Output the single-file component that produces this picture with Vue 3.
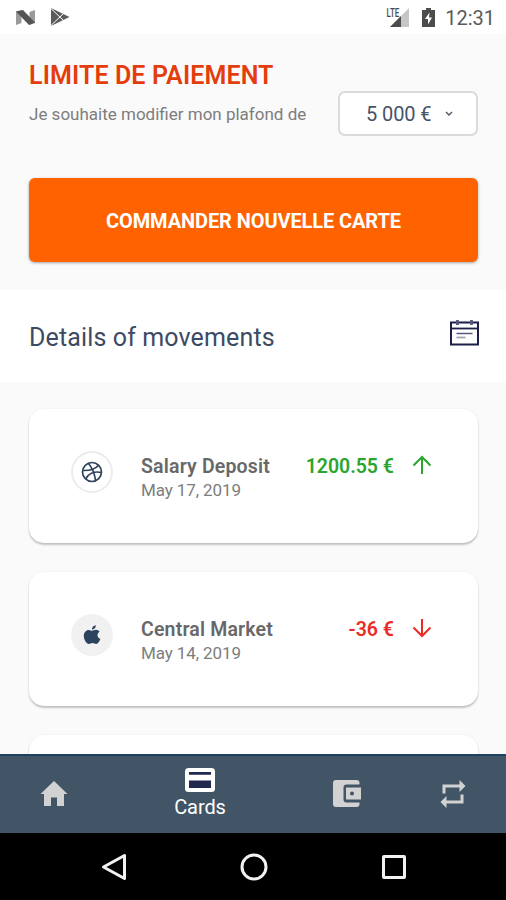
<template>
  <div class="screen">
    <header class="status-bar">
      <div class="status-left">
        <svg width="21" height="17" viewBox="0 0 21 17">
          <path d="M1 2.500 6.500 1v13L1 16z" fill="#9a9a9a" />
          <path d="M14.500 3 20 1v13l-5.500 2z" fill="#9a9a9a" />
          <path d="M1 2.500 8 1l12 12.500-6 2.500z" fill="#555" />
        </svg>
        <svg width="20" height="20" viewBox="0 0 20 20">
          <path d="M1 1 19.500 10 1 19z" fill="#5c5c5c" />
          <path d="M1 1.500 14 14M1 18.500 14 6" stroke="#fff" stroke-width="1" fill="none" />
        </svg>
      </div>
      <div class="status-right">
        <div class="signal">
          <span class="lte">LTE</span>
          <svg width="20" height="19" viewBox="0 0 20 19">
            <path d="M19 0v19H0z" fill="#c6c6c6" />
            <path d="M11 8v11H0z" fill="#4c4c4c" />
          </svg>
        </div>
        <svg class="battery" width="13" height="19" viewBox="0 0 13 19">
          <path d="M4 0h5v2h4v17H0V2h4z" fill="#4c4c4c" />
          <path d="M7.500 4.500 3 11h3v5.500L10 9.500H7z" fill="#fff" />
        </svg>
        <span class="clock">12:31</span>
      </div>
    </header>

    <section class="limit">
      <h1 class="limit-title">LIMITE DE PAIEMENT</h1>
      <div class="limit-row">
        <span class="limit-text">Je souhaite modifier mon plafond de</span>
        <button class="limit-select" type="button">
          <span>5 000 €</span>
          <svg width="8" height="6" viewBox="0 0 8 6">
            <path d="M1 1l3 3 3-3" fill="none" stroke="#4b5563" stroke-width="1.400" />
          </svg>
        </button>
      </div>
      <button class="order-btn" type="button"><span>COMMANDER NOUVELLE CARTE</span></button>
    </section>

    <section class="movements-head">
      <h2>Details of movements</h2>
      <svg width="29" height="26" viewBox="0 0 29 26">
        <rect x="1" y="2.500" width="27" height="22" fill="none" stroke="#1c1f4a" stroke-width="2" />
        <path d="M1 8.500h27" stroke="#1c1f4a" stroke-width="1.800" />
        <path d="M7.500 0v5M21.500 0v5" stroke="#55587a" stroke-width="2.800" />
        <path d="M6.500 13.500h16" stroke="#55587a" stroke-width="1.500" />
        <path d="M6.500 17.500h9" stroke="#a3a5b5" stroke-width="1.800" />
      </svg>
    </section>

    <main class="list">
      <article v-for="item in movements" :key="item.id" class="card">
        <div class="avatar" :class="item.icon">
          <svg v-if="item.icon === 'dribbble'" width="22" height="22" viewBox="0 0 22 22" fill="none" stroke="#30435c" stroke-width="1.700">
            <circle cx="11" cy="11" r="9.500" />
            <path d="M7.300 2.300C11 6.500 13.500 12 14.600 19.700M1.600 9.500C8 9.700 14 8.500 17.500 4.200M4.600 18C7.500 12.500 13.500 9.800 20.500 11.500" />
          </svg>
          <svg v-else-if="item.icon === 'apple'" width="18" height="20" viewBox="0 0 18 20" fill="#2b435d">
            <path d="M9 5.800c1.200 0 2.300-1 4-1 1.600 0 2.900.8 3.600 1.900-3.100 1.800-2.700 5.900.7 7.200-.7 2-2.400 5-4.200 5-1.300 0-1.900-.8-3.600-.8s-2.300.8-3.600.8C3.300 18.900.8 14.700.8 11c0-3.800 2.400-6.100 4.900-6.100 1.500 0 2.400.9 3.300.9z" />
            <path d="M8.900 4.500C8.800 2.200 10.800.3 12.900.2c.1 2.300-1.700 4.300-4 4.300z" />
          </svg>
        </div>
        <div class="info">
          <div class="name">{{ item.name }}</div>
          <div class="date">{{ item.date }}</div>
        </div>
        <div class="amount" :class="item.direction">
          <span>{{ item.amount }}</span>
          <svg width="20" height="20" viewBox="0 0 20 20">
            <path v-if="item.direction === 'up'" d="M10 19V2M1.500 10.500 10 2l8.500 8.500" />
            <path v-else d="M10 1v17M1.500 9.500 10 18l8.500-8.500" />
          </svg>
        </div>
      </article>
      <article class="card"></article>
    </main>

    <nav class="tabs">
      <a class="tab">
        <svg width="28" height="26" viewBox="0 0 28 26">
          <path d="M14 0 .5 13H4v12h7v-8.500h6V25h7V13h3.500z" fill="#d2d2d2" />
        </svg>
      </a>
      <a class="tab active">
        <svg width="30" height="24" viewBox="0 0 30 24">
          <rect width="30" height="24" rx="3.500" fill="#fff" />
          <path d="M4 4h22v2.800H4zM4 12.500h22V20H4z" fill="#22294f" />
        </svg>
        <span>Cards</span>
      </a>
      <a class="tab wallet">
        <svg width="28" height="27" viewBox="0 0 28 27">
          <path d="M3 0h20.500a3 3 0 0 1 3 3v1.500H13.500a3 3 0 0 0-3 3v12a3 3 0 0 0 3 3h13V24a3 3 0 0 1-3 3H3a3 3 0 0 1-3-3V3a3 3 0 0 1 3-3z" fill="#d2d2d2" />
          <path d="M13 7.500h15v12H13zM19 11.500a2 2 0 1 0 0 4 2 2 0 0 0 0-4z" fill="#d2d2d2" fill-rule="evenodd" />
        </svg>
      </a>
      <a class="tab repeat">
        <svg width="26" height="28" viewBox="0 0 26 28" fill="#d2d2d2">
          <path d="M2.500 4.500h17V0l6 6-6 6V7.500h-14v6h-3z" />
          <path d="M23.500 23.500h-17V28l-6-6 6-6v4.500h14v-6h3z" />
        </svg>
      </a>
    </nav>

    <footer class="system-nav">
      <svg width="26" height="28" viewBox="0 0 26 28">
        <path d="M23.500 2.500v23L2.500 14z" />
      </svg>
      <svg width="28" height="28" viewBox="0 0 28 28">
        <circle cx="14" cy="14" r="12" />
      </svg>
      <svg width="26" height="28" viewBox="0 0 26 28">
        <rect x="2.500" y="3.500" width="21" height="21" rx="0.500" />
      </svg>
    </footer>
  </div>
</template>

<script setup>
const movements = [
  { id: 1, icon: "dribbble", name: "Salary Deposit", date: "May 17, 2019", amount: "1200.55 €", direction: "up" },
  { id: 2, icon: "apple", name: "Central Market", date: "May 14, 2019", amount: "-36 €", direction: "down" },
];
</script>

<style>
body {
  margin: 0;
}
</style>

<style scoped>
.screen {
  display: flex;
  flex-direction: column;
  width: 506px;
  height: 900px;
  overflow: hidden;
  background: #fafafa;
  font-family: Roboto, "Liberation Sans", sans-serif;
}

.screen * {
  box-sizing: border-box;
}

svg {
  display: block;
  flex-shrink: 0;
}

button {
  font-family: inherit;
}

.status-bar {
  display: flex;
  justify-content: space-between;
  flex-shrink: 0;
  height: 34px;
  padding: 0 11px 0 15px;
  background: #fff;
}

.status-left {
  display: flex;
  align-items: center;
  gap: 14px;
}

.status-right {
  display: flex;
  align-items: center;
}

.signal {
  display: flex;
  align-items: flex-start;
  padding-top: 1px;
}

.lte {
  margin: -2px -12px 0 0;
  font-size: 13px;
  line-height: 13px;
  font-weight: 500;
  color: #4c4c4c;
  transform: scaleX(0.62);
  transform-origin: 70% 50%;
}

.battery {
  margin: 0 10px 0 12px;
}

.clock {
  padding-top: 3px;
  font-size: 20px;
  line-height: 33px;
  color: #5a5a5a;
}

.limit {
  flex-shrink: 0;
  height: 256px;
  padding: 28px 28px 0 29px;
}

.limit-title {
  margin: 0;
  font-size: 25px;
  line-height: 28px;
  font-weight: 600;
  letter-spacing: 0.12px;
  white-space: nowrap;
  color: #e43d0c;
}

.limit-row {
  display: flex;
  justify-content: space-between;
  margin-top: 1px;
}

.limit-text {
  padding-top: 13px;
  font-size: 17px;
  line-height: 20px;
  white-space: nowrap;
  color: #7d7d7d;
}

.limit-select {
  display: flex;
  align-items: center;
  gap: 14px;
  width: 140px;
  height: 45px;
  padding: 0 0 0 26px;
  border: 2px solid #dadada;
  border-radius: 7px;
  background: #fff;
  font-size: 20px;
  letter-spacing: -0.1px;
  color: #465369;
}

.order-btn {
  width: 449px;
  height: 84px;
  margin-top: 42px;
  padding: 2px 0 0;
  border: 0;
  border-radius: 6px;
  background: #ff6200;
  box-shadow: 0 1px 3px rgba(0, 0, 0, 0.35);
  font-size: 20px;
  font-weight: 700;
  letter-spacing: -0.1px;
  color: #fff;
}

.movements-head {
  display: flex;
  justify-content: space-between;
  flex-shrink: 0;
  height: 92px;
  padding: 30px 27px 0 29px;
  background: #fff;
}

.movements-head h2 {
  margin: 0;
  font-size: 25px;
  line-height: 35px;
  font-weight: 400;
  letter-spacing: 0.13px;
  color: #3d4a63;
}

.list {
  flex: 1;
  min-height: 0;
  padding: 27px 28px 0 29px;
  overflow: hidden;
}

.card {
  display: flex;
  height: 134px;
  margin-bottom: 29px;
  padding: 42px 46px 0 42px;
  border-radius: 15px;
  background: #fff;
  box-shadow: 0 2px 2px rgba(0, 0, 0, 0.22), 0 0 2px rgba(0, 0, 0, 0.07);
}

.avatar {
  display: flex;
  align-items: center;
  justify-content: center;
  width: 42px;
  height: 42px;
  border-radius: 50%;
  background: #f1f1f1;
}

.avatar.dribbble {
  border: 2px solid #ececec;
  background: #fff;
}

.info {
  flex: 1;
  margin-left: 28px;
  white-space: nowrap;
}

.name {
  margin-top: 3px;
  font-size: 19.5px;
  line-height: 25px;
  font-weight: 600;
  letter-spacing: 0.18px;
  color: #686868;
}

.date {
  font-size: 17px;
  line-height: 22px;
  letter-spacing: -0.1px;
  color: #7d7d7d;
}

.amount {
  display: flex;
  gap: 18px;
  height: 25px;
  margin-top: 3px;
  font-size: 19.5px;
  line-height: 25px;
  font-weight: 600;
}

.amount svg {
  margin-top: 1px;
  fill: none;
  stroke: currentColor;
  stroke-width: 2;
}

.up {
  color: #2aa52e;
}

.down {
  color: #ec2b24;
}

.tabs {
  display: flex;
  flex-shrink: 0;
  height: 79px;
  padding-bottom: 2px;
  border-top: 2px solid #1f4060;
  background: #425567;
}

.tab {
  display: flex;
  flex-direction: column;
  align-items: center;
  justify-content: center;
  width: 108px;
}

.tab.active {
  width: 184px;
  font-size: 20px;
  line-height: 24px;
  color: #fff;
}

.tab.active span {
  margin-top: 3px;
  letter-spacing: -0.1px;
}

.tab.wallet {
  width: 110px;
}

.tab.repeat {
  width: 102px;
}

.system-nav {
  display: flex;
  align-items: center;
  justify-content: center;
  gap: 113px;
  flex-shrink: 0;
  height: 67px;
  padding-left: 1px;
  background: #000;
}

.system-nav svg {
  fill: none;
  stroke: #f2f2f2;
  stroke-width: 3;
  stroke-linejoin: round;
}
</style>
